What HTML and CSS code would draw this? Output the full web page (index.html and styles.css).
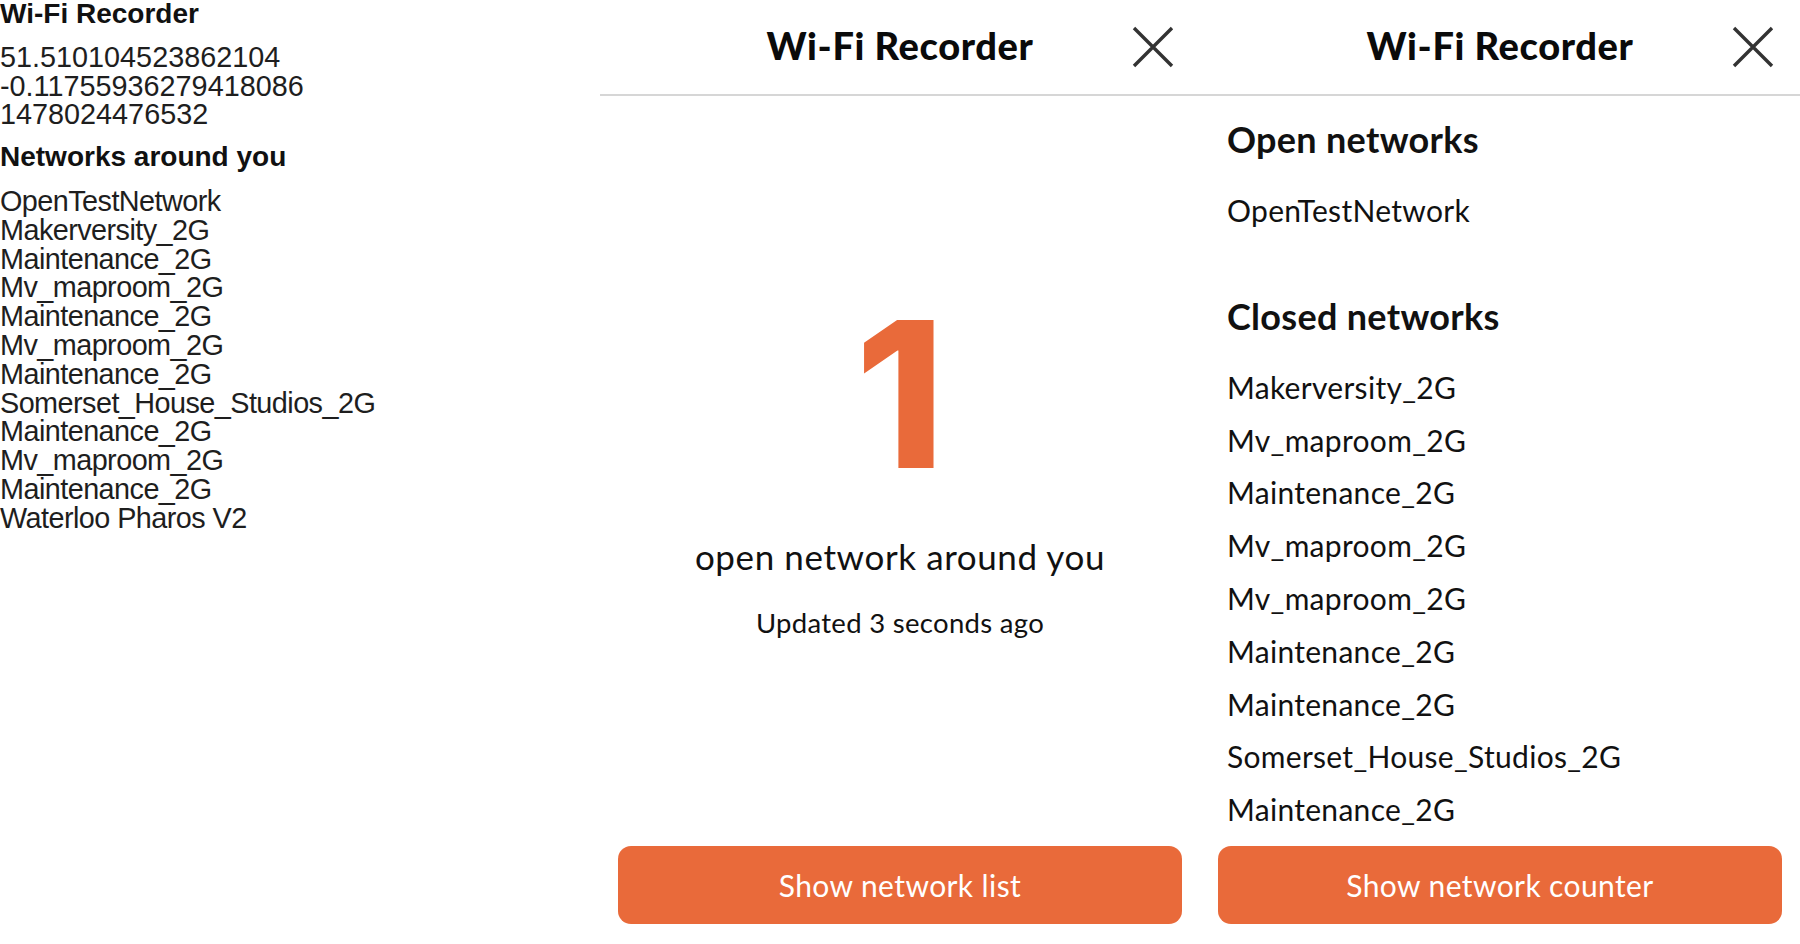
FILE: index.html
```html
<!DOCTYPE html>
<html lang="en">
<head>
<meta charset="utf-8">
<title>Wi-Fi Recorder</title>
<link rel="stylesheet" href="styles.css">
</head>
<body>
<div class="screens">
  <section class="raw">
    <h1 class="raw-title">Wi-Fi Recorder</h1>
    <div class="raw-coords">
      <div>51.510104523862104</div>
      <div>-0.11755936279418086</div>
      <div>1478024476532</div>
    </div>
    <h2 class="raw-heading">Networks around you</h2>
    <ul class="raw-list">
      <li>OpenTestNetwork</li>
      <li>Makerversity_2G</li>
      <li>Maintenance_2G</li>
      <li>Mv_maproom_2G</li>
      <li>Maintenance_2G</li>
      <li>Mv_maproom_2G</li>
      <li>Maintenance_2G</li>
      <li>Somerset_House_Studios_2G</li>
      <li>Maintenance_2G</li>
      <li>Mv_maproom_2G</li>
      <li>Maintenance_2G</li>
      <li>Waterloo Pharos V2</li>
    </ul>
  </section>

  <section class="phone">
    <header class="app-header">
      <h1 class="app-title">Wi-Fi Recorder</h1>
      <button class="close" aria-label="Close">
        <svg viewBox="0 0 44 44" width="44" height="44"><path d="M3 3 L41 41 M41 3 L3 41" stroke="#333" stroke-width="3.4" fill="none"/></svg>
      </button>
    </header>
    <main class="counter">
      <div class="count">1</div>
      <p class="count-label">open network around you</p>
      <p class="updated">Updated 3 seconds ago</p>
    </main>
    <div class="actions"><button class="primary">Show network list</button></div>
  </section>

  <section class="phone">
    <header class="app-header">
      <h1 class="app-title">Wi-Fi Recorder</h1>
      <button class="close" aria-label="Close">
        <svg viewBox="0 0 44 44" width="44" height="44"><path d="M3 3 L41 41 M41 3 L3 41" stroke="#333" stroke-width="3.4" fill="none"/></svg>
      </button>
    </header>
    <main class="lists">
      <h2 class="list-heading">Open networks</h2>
      <ul class="net-list open">
        <li>OpenTestNetwork</li>
      </ul>
      <h2 class="list-heading">Closed networks</h2>
      <ul class="net-list">
        <li>Makerversity_2G</li>
        <li>Mv_maproom_2G</li>
        <li>Maintenance_2G</li>
        <li>Mv_maproom_2G</li>
        <li>Mv_maproom_2G</li>
        <li>Maintenance_2G</li>
        <li>Maintenance_2G</li>
        <li>Somerset_House_Studios_2G</li>
        <li>Maintenance_2G</li>
      </ul>
    </main>
    <div class="actions"><button class="primary">Show network counter</button></div>
  </section>
</div>
</body>
</html>
```

FILE: styles.css
```css
* { box-sizing: border-box; }
html, body { margin: 0; padding: 0; background: #fff; }
body { width: 1800px; height: 944px; overflow: hidden; }

.screens {
  display: grid;
  grid-template-columns: 600px 600px 600px;
  height: 944px;
}

/* Left raw debug screen */
.raw {
  font-family: "Liberation Sans", Arial, sans-serif;
  color: #1e1e1e;
  font-size: 28.8px;
  line-height: 28.8px;
}
.raw-title, .raw-heading {
  margin: 0;
  font-size: 28px;
  font-weight: 700;
  color: #111;
  line-height: 28.8px;
}
.raw-coords { margin-top: 14px; }
.raw-heading { margin-top: 14px; }
.raw-list { list-style: none; margin: 15px 0 0; padding: 0; letter-spacing: -0.55px; }

/* App screens */
.phone {
  display: flex;
  flex-direction: column;
  font-family: "Lato", "Liberation Sans", sans-serif;
  color: #111;
}
.app-header {
  height: 96px;
  border-bottom: 2px solid #d6d6d6;
  display: grid;
  grid-template-columns: 1fr auto 1fr;
  align-items: center;
}
.app-title {
  grid-column: 2;
  margin: 0 0 5px;
  font-size: 38px;
  font-weight: 900;
  letter-spacing: 0.6px;
  color: #0a0a0a;
}
.close {
  grid-column: 3;
  justify-self: end;
  margin-right: 25px;
  padding: 0;
  border: 0;
  background: none;
  width: 44px;
  height: 44px;
  display: flex;
}

.counter {
  flex: 1;
  display: flex;
  flex-direction: column;
  align-items: center;
  padding-top: 196px;
}
.count {
  font-family: "Inter", "Liberation Sans", sans-serif;
  font-weight: 800;
  font-size: 204px;
  line-height: 204px;
  color: #e96a3a;
}
.count-label {
  margin: 40px 0 0;
  font-size: 35px;
  letter-spacing: 0.6px;
  line-height: 40px;
}
.updated {
  margin: 32px 0 0;
  font-size: 27.5px;
  letter-spacing: 0.3px;
  line-height: 30px;
}

.lists {
  flex: 1;
  padding: 18px 27px 0;
}
.list-heading {
  margin: 0;
  font-size: 36px;
  font-weight: 700;
  line-height: 50px;
  letter-spacing: 0.3px;
}
.net-list {
  list-style: none;
  margin: 20px 0 0;
  padding: 0;
  font-size: 30px;
  letter-spacing: 0.3px;
}
.net-list li { line-height: 52.8px; }
.net-list.open { margin-bottom: 54px; }

.actions {
  padding: 0 18px 20px;
}
.primary {
  display: block;
  width: 100%;
  height: 78px;
  border: 0;
  border-radius: 13px;
  background: #e96a3a;
  color: #fff;
  font-family: "Lato", "Liberation Sans", sans-serif;
  font-size: 30px;
  letter-spacing: 0.4px;
}
```
